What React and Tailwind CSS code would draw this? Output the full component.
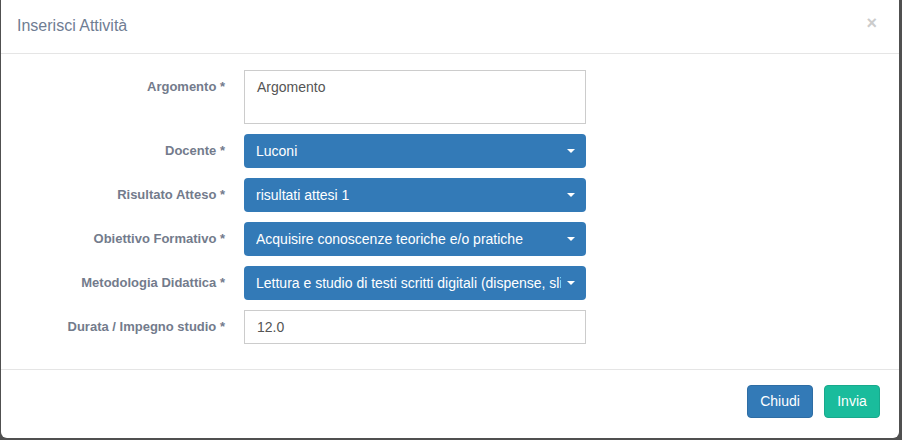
// Modale "Inserisci Attività" — form con campi select in stile bootstrap
import React from 'react';

const righe = [
  { label: 'Docente *', valore: 'Luconi', tipo: 'select' },
  { label: 'Risultato Atteso *', valore: 'risultati attesi 1', tipo: 'select' },
  { label: 'Obiettivo Formativo *', valore: 'Acquisire conoscenze teoriche e/o pratiche', tipo: 'select' },
  { label: 'Metodologia Didattica *', valore: 'Lettura e studio di testi scritti digitali (dispense, slide, articoli)', tipo: 'select' },
  { label: 'Durata / Impegno studio *', valore: '12.0', tipo: 'input' },
];

const Caret = () => (
  <svg width="8" height="4" viewBox="0 0 8 4" className="shrink-0">
    <path d="M0 0 L8 0 L4 4 Z" fill="#fff" />
  </svg>
);

const Label = ({ children }) => (
  <div className="w-[224px] shrink-0 pt-[7px] text-right text-[13px] font-bold leading-5 text-[#737b8c]">{children}</div>
);

const App = () => {
  return (
    <div className="w-[902px] h-[440px] overflow-hidden bg-[#505050] pl-[1px] pr-[3px] pb-[2px] font-['Liberation_Sans',Arial,sans-serif]">
      <div className="h-full bg-white rounded-b-[6px] flex flex-col">
        {/* Header */}
        <div className="h-[54px] shrink-0 flex items-center justify-between pl-[16px] pr-[22px] border-b border-[#e5e5e5]">
          <h4 className="text-[16px] text-[#6f7d93] leading-5 mb-[2px]">Inserisci Attività</h4>
          <span className="text-[18px] font-bold text-[#cccccc] leading-none mb-[7px]">×</span>
        </div>

        {/* Body */}
        <div className="flex-1 pt-[16px]">
          <div className="flex mb-[10px]">
            <Label>Argomento *</Label>
            <div className="ml-[19px] w-[342px] h-[54px] border border-[#cccccc] px-[12px] pt-[6px] text-[14px] leading-5 text-[#555]">Argomento</div>
          </div>
          {righe.map(r => (
            <div key={r.label} className="flex mb-[10px]">
              <Label>{r.label}</Label>
              {r.tipo === 'select' ? (
                <div className="ml-[19px] w-[342px] h-[34px] rounded-[4px] bg-[#337ab7] flex items-center pl-[12px] pr-[11px] gap-[6px] text-[14px] text-white">
                  <span className="flex-1 whitespace-nowrap overflow-hidden">{r.valore}</span>
                  <Caret />
                </div>
              ) : (
                <div className="ml-[19px] w-[342px] h-[34px] border border-[#cccccc] flex items-center px-[12px] text-[14px] text-[#555]">{r.valore}</div>
              )}
            </div>
          ))}
        </div>

        {/* Footer */}
        <div className="h-[69px] shrink-0 border-t border-[#e5e5e5] flex items-start justify-end gap-[11px] pt-[15px] pr-[19px]">
          <button className="h-[33px] w-[66px] rounded-[4px] bg-[#337ab7] border border-[#2e6da4] text-white text-[14px]">Chiudi</button>
          <button className="h-[33px] w-[56px] rounded-[4px] bg-[#1abc9c] border border-[#18a98c] text-white text-[14px]">Invia</button>
        </div>
      </div>
    </div>
  );
};

export default App;
